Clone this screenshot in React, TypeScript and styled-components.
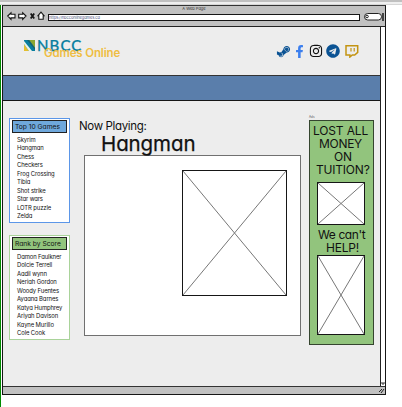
import React from "react";
import styled, { createGlobalStyle } from "styled-components";
import { FaSteamSymbol, FaFacebookF, FaInstagram, FaTelegram } from "react-icons/fa";

const GlobalStyle = createGlobalStyle`
  * { box-sizing: border-box; }
  body {
    margin: 0;
    background: #fff;
    font-family: "Inter", "Liberation Sans", sans-serif;
    font-feature-settings: "cv11" 1;
    color: #111;
  }
`;

const Page = styled.div`
  width: 402px;
  height: 407px;
  overflow: hidden;
  display: flex;
  flex-direction: column;
`;
const TopStrip = styled.div`
  height: 5px;
  flex: none;
  background: linear-gradient(#c0c0c0 0 2px, #efefef 2px 4px, #d6d6d6 4px);
`;
const Workspace = styled.div`
  flex: 1;
  display: flex;
  border-left: 1px solid #008a00;
  padding-left: 1px;
`;
const Browser = styled.div`
  width: 384px;
  height: 390px;
  border: 1px solid #161616;
  border-top-color: #333;
  display: flex;
  flex-direction: column;
`;
const Chrome = styled.div`
  height: 21px;
  flex: none;
  background: #c1c1c1;
  border-bottom: 1px solid #222;
`;
const WindowTitle = styled.div`
  height: 8px;
  font-size: 4px;
  line-height: 6px;
  text-align: center;
  color: #333;
`;
const Toolbar = styled.div`
  display: flex;
  height: 8px;
  padding-left: 4px;
`;
const NavIcons = styled.svg`
  width: 41px;
  height: 10px;
  margin-top: -3px;
  flex: none;
`;
const AddressBar = styled.div`
  width: 313px;
  height: 7px;
  background: #fff;
  border: 1px solid #161616;
  font-size: 4px;
  line-height: 6px;
  letter-spacing: -0.08px;
  color: #4a4f7c;
  overflow: hidden;
`;
const SearchIcon = styled.svg`
  width: 22px;
  height: 10px;
  margin: -2px 0 0 3px;
  flex: none;
`;
const Viewport = styled.div`
  flex: 1;
  display: flex;
  min-height: 0;
`;
const Site = styled.div`
  width: 378px;
  background: #ededed;
  border-right: 1px solid #222;
`;
const ScrollTrack = styled.div`
  flex: 1;
  background: #fff;
  display: flex;
  align-items: flex-end;
`;
const StatusBar = styled.div`
  height: 8px;
  flex: none;
  background: #c1c1c1;
  border-top: 1px solid #333;
  display: flex;
  justify-content: flex-end;
`;
const Header = styled.header`
  height: 48px;
  display: flex;
  justify-content: space-between;
  padding: 13px 21px 0 21px;
`;
const Brand = styled.div`
  display: grid;
  grid-template-columns: 13px 100px;
  grid-template-rows: 10px 14px;
`;
const BrandMark = styled.svg`
  width: 11px;
  height: 11px;
`;
const BrandName = styled.div`
  font: 500 15px/10px "Lato", sans-serif;
  letter-spacing: 1.1px;
  color: #087e9f;
  -webkit-text-stroke: 0.25px #087e9f;
`;
const BrandSub = styled.div`
  grid-column: 2;
  padding-left: 7px;
  margin-top: -4px;
  font-size: 11.5px;
  font-weight: 600;
  line-height: 14px;
  letter-spacing: -0.15px;
  white-space: nowrap;
  color: #efbd43;
`;
const Socials = styled.div`
  display: flex;
  align-items: center;
  height: 14px;
  margin-top: 4px;
`;
const SocialIcon = styled.span<{ $color: string; $gap: number }>`
  display: flex;
  color: ${(p) => p.$color};
  margin-left: ${(p) => p.$gap}px;
`;
const NavBand = styled.div`
  height: 26px;
  background: #5a7eab;
  border-top: 1px solid #333;
  border-bottom: 1px solid #161616;
`;
const Content = styled.main`
  display: flex;
  align-items: flex-start;
  padding: 15px 0 0 6px;
`;
const Sidebar = styled.aside`
  width: 61px;
  padding-top: 2px;
  display: flex;
  flex-direction: column;
  gap: 12px;
`;
const Panel = styled.section<{ $border: string }>`
  height: 105px;
  background: #fff;
  border: 1px solid ${(p) => p.$border};
  padding: 1px 2px;
`;
const PanelTitle = styled.h2<{ $fill: string; $spacing: number }>`
  margin: 0 0 3px;
  height: 13px;
  width: 55px;
  background: ${(p) => p.$fill};
  border: 1px solid #222;
  padding-left: 2px;
  font-size: 6.7px;
  font-weight: 400;
  line-height: 12px;
  letter-spacing: ${(p) => p.$spacing}px;
  white-space: nowrap;
`;
const PanelList = styled.ul`
  list-style: none;
  margin: 0;
  padding: 0 0 0 5px;
  font-size: 5.9px;
  line-height: 8.45px;
  letter-spacing: -0.1px;
  white-space: nowrap;
`;
const Stage = styled.section`
  width: 239px;
  padding-left: 9px;
`;
const NowPlaying = styled.div`
  font-size: 11.5px;
  line-height: 14px;
  letter-spacing: -0.35px;
  padding-top: 3px;
`;
const GameTitle = styled.h1`
  margin: 0;
  padding-left: 22px;
  height: 22px;
  font-size: 20.5px;
  font-weight: 400;
  line-height: 22px;
  letter-spacing: -0.1px;
  -webkit-text-stroke: 0.25px #111;
`;
const GameBoard = styled.div`
  margin-left: 5px;
  width: 217px;
  height: 181px;
  background: #fff;
  border: 1px solid #707070;
  padding: 14px 0 0 97px;
`;
const AdColumn = styled.aside`
  width: 65px;
`;
const AdLabel = styled.div`
  height: 5px;
  margin-top: -1px;
  font-size: 3px;
  line-height: 4px;
  color: #555;
`;
const AdBody = styled.div`
  height: 225px;
  background: #92c47d;
  border: 1px solid #35452f;
  padding: 3px 0 0 7px;
`;
const AdText = styled.p<{ $shift: number; $spacing: number }>`
  margin: 0 0 0 ${(p) => p.$shift}px;
  font-size: 12px;
  line-height: 13px;
  letter-spacing: ${(p) => p.$spacing}px;
  white-space: nowrap;
`;
const Spacer = styled.div<{ $h: number }>`
  height: ${(p) => p.$h}px;
`;
const Crossed = styled.svg`
  display: block;
`;

function Placeholder({ width, height }: { width: number; height: number }) {
  return (
    <Crossed width={width} height={height}>
      <rect x=".5" y=".5" width={width - 1} height={height - 1} fill="#fff" stroke="#161616" />
      <path d={`M1 1L${width - 1} ${height - 1}M${width - 1} 1L1 ${height - 1}`} stroke="#777" />
    </Crossed>
  );
}

const games = ["Skyrim", "Hangman", "Chess", "Checkers", "Frog Crossing", "Tibia", "Shot strike", "Star wars", "LOTR puzzle", "Zelda"];
const players = ["Damon Faulkner", "Dolcie Terrell", "Aadil wynn", "Neriah Gordon", "Woody Fuentes", "Ayaana Barnes", "Katya Humphrey", "Ariyah Davison", "Kayne Murillo", "Cole Cook"];

export default function App() {
  return (
    <Page>
      <GlobalStyle />
      <TopStrip />
      <Workspace>
        <Browser>
          <Chrome>
            <WindowTitle>A Web Page</WindowTitle>
            <Toolbar>
              <NavIcons viewBox="0 0 41 10" fill="#fff" stroke="#161616" strokeWidth="1.1">
                <path d="M.7 5l3.300-3.200v1.500h4v3.600H4v1.400z" />
                <path d="M19 5l-3.300-3.200v1.500h-4v3.600h4v1.400z" />
                <path d="M23.700 2.500l3.500 5M27.200 2.500l-3.500 5" strokeWidth="1.800" />
                <path d="M34 1.200l3 3.500h-.8v3.600h-4.400V4.700H31z" />
              </NavIcons>
              <AddressBar>https://nbcconlinegames.ca</AddressBar>
              <SearchIcon viewBox="0 0 22 10" fill="#fff" stroke="#222">
                <rect x="1.500" y="1.500" width="17" height="6.500" rx="3.200" />
                <circle cx="4" cy="4.500" r="1.300" fill="none" />
                <path d="M20 1v8" strokeWidth="1.600" />
              </SearchIcon>
            </Toolbar>
          </Chrome>
          <Viewport>
            <Site>
              <Header>
                <Brand>
                  <BrandMark viewBox="0 0 11 11">
                    <rect width="11" height="11" fill="#087e9f" />
                    <path d="M0 4L5 11H0z" fill="#e5bf2e" />
                    <path d="M0 1L8 11H5L0 4z" fill="#e9f2ea" />
                    <path d="M5 0H11V8z" fill="#8aa632" />
                    <path d="M3 0H5L11 8V10z" fill="#176070" />
                  </BrandMark>
                  <BrandName>NBCC</BrandName>
                  <BrandSub>Games Online</BrandSub>
                </Brand>
                <Socials>
                  <SocialIcon $color="#0b5394" $gap={0}><FaSteamSymbol size={15} /></SocialIcon>
                  <SocialIcon $color="#3c7fee" $gap={2}><FaFacebookF size={13} /></SocialIcon>
                  <SocialIcon $color="#111" $gap={3}><FaInstagram size={14} /></SocialIcon>
                  <SocialIcon $color="#0b5394" $gap={3}><FaTelegram size={14} /></SocialIcon>
                  <SocialIcon $color="#c39412" $gap={5}>
                    <svg width="14" height="14" viewBox="0 0 14 14" fill="none" stroke="currentColor">
                      <path d="M1 1.700H12.700V8.300L9.700 11H7.300L4.900 13V11H1z" strokeWidth="1.500" />
                      <path d="M6 4v3.500M9.200 4v3.500" strokeWidth="1.200" />
                    </svg>
                  </SocialIcon>
                </Socials>
              </Header>
              <NavBand />
              <Content>
                <Sidebar>
                  <Panel $border="#5b96e8">
                    <PanelTitle $fill="#6fa8dc" $spacing={0}>Top 10 Games</PanelTitle>
                    <PanelList>{games.map((g) => <li key={g}>{g}</li>)}</PanelList>
                  </Panel>
                  <Panel $border="#a9d39a">
                    <PanelTitle $fill="#92c47d" $spacing={0}>Rank by Score</PanelTitle>
                    <PanelList>{players.map((p) => <li key={p}>{p}</li>)}</PanelList>
                  </Panel>
                </Sidebar>
                <Stage>
                  <NowPlaying>Now Playing:</NowPlaying>
                  <GameTitle>Hangman</GameTitle>
                  <GameBoard><Placeholder width={105} height={126} /></GameBoard>
                </Stage>
                <AdColumn>
                  <AdLabel>Ads</AdLabel>
                  <AdBody>
                    <AdText $shift={-4} $spacing={-0.15}>LOST ALL</AdText>
                    <AdText $shift={2} $spacing={-0.3}>MONEY</AdText>
                    <AdText $shift={17} $spacing={-0.3}>ON</AdText>
                    <AdText $shift={-1} $spacing={-0.2}>TUITION?</AdText>
                    <Spacer $h={6} />
                    <Placeholder width={48} height={43} />
                    <Spacer $h={3} />
                    <AdText $shift={1} $spacing={-0.4}>We can't</AdText>
                    <AdText $shift={9} $spacing={-0.2}>HELP!</AdText>
                    <Spacer $h={1} />
                    <Placeholder width={48} height={80} />
                  </AdBody>
                </AdColumn>
              </Content>
            </Site>
            <ScrollTrack>
              <svg width="4" height="4"><path d="M0 1h4M1 2h2" stroke="#333" /></svg>
            </ScrollTrack>
          </Viewport>
          <StatusBar>
            <svg width="7" height="7"><path d="M1 5l3-3M3 6l3-4" stroke="#222" /></svg>
          </StatusBar>
        </Browser>
      </Workspace>
    </Page>
  );
}
